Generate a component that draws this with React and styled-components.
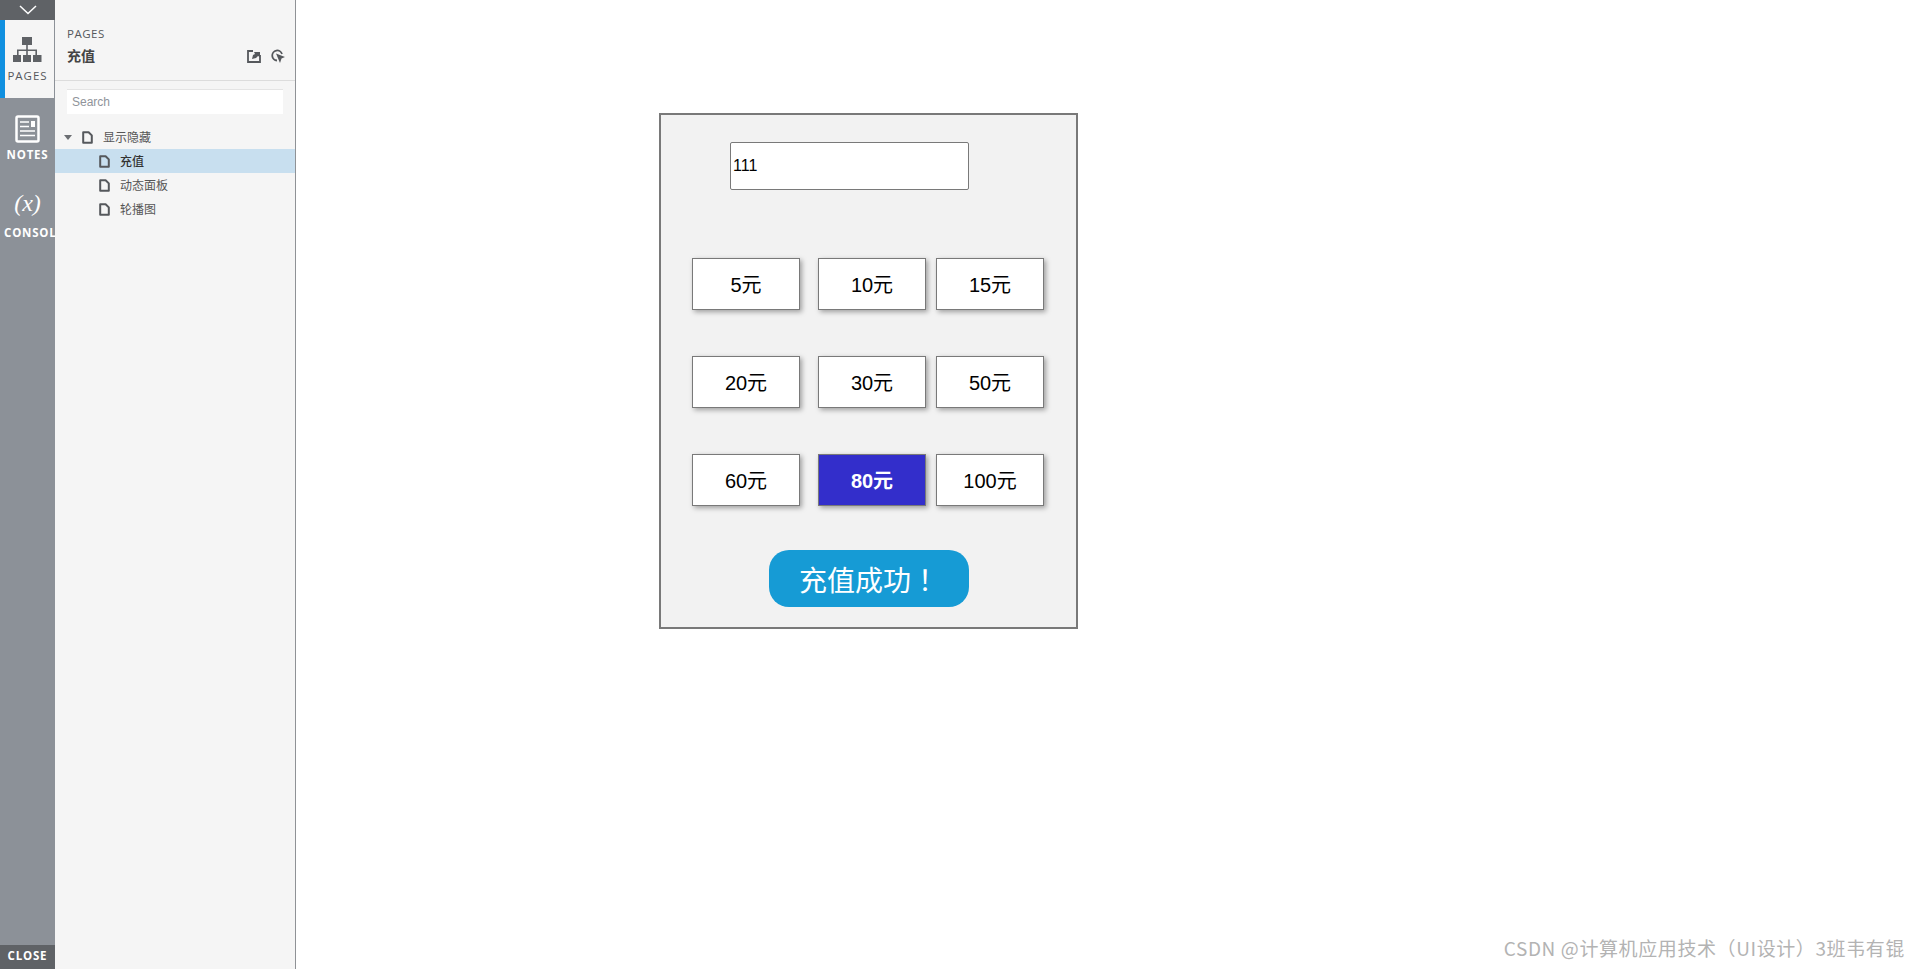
import React from "react"
import styled, { createGlobalStyle } from "styled-components"

const amounts = ["5元", "10元", "15元", "20元", "30元", "50元", "60元", "80元", "100元"]
const pages = ["充值", "动态面板", "轮播图"]

const DocIcon = () => (
  <svg width="11" height="13" viewBox="0 0 11 13" fill="none">
    <path d="M1.200 1.200h5.400l3.200 3.200v7.400H1.200z" stroke="#55585c" strokeWidth="2" strokeLinejoin="round" />
  </svg>
)

export default function App() {
  return (
    <>
      <GlobalStyle />
      <Page>
        <Rail>
          <Collapse>
            <svg width="18" height="10" viewBox="0 0 18 10" fill="none">
              <path d="M1 1l8 7.500L17 1" stroke="#fff" strokeWidth="1.500" />
            </svg>
          </Collapse>
          <RailTab $active>
            <svg width="29" height="26" viewBox="0 0 29 26" fill="#5f6266">
              <rect x="9" y="0" width="10" height="8" />
              <rect x="13.200" y="8" width="1.600" height="10" />
              <path d="M4 18v-5.500h20V18h-1.600v-3.900H5.600V18z" />
              <rect x="0" y="18" width="8" height="7" />
              <rect x="10" y="18" width="8" height="7" />
              <rect x="20" y="18" width="8.500" height="7" />
            </svg>
            <RailLabel $active>PAGES</RailLabel>
          </RailTab>
          <RailTab>
            <svg width="25" height="28" viewBox="0 0 25 28" fill="none">
              <rect x="1.500" y="1.500" width="22" height="25" rx="1.500" stroke="#fff" strokeWidth="2.500" />
              <path d="M5 7h9M5 11.500h9M5 16h15M5 20.500h15" stroke="#fff" strokeWidth="1.600" />
              <rect x="16" y="6" width="4" height="6" fill="#fff" />
            </svg>
            <RailLabel>NOTES</RailLabel>
          </RailTab>
          <RailTab>
            <Formula>(x)</Formula>
            <RailLabel $overflow>CONSOLE</RailLabel>
          </RailTab>
          <CloseBar>CLOSE</CloseBar>
        </Rail>

        <Sidebar>
          <SidebarHeader>
            <Overline>PAGES</Overline>
            <TitleRow>
              <PageTitle>充值</PageTitle>
              <HeaderIcons>
                <svg width="14" height="13" viewBox="0 0 14 13" fill="none">
                  <path d="M6 1H1v11h12V5" stroke="#55585c" strokeWidth="1.800" />
                  <path d="M5 9l1-4 2-1-1-2h6v5l-2-1-2 2z" fill="#55585c" />
                </svg>
                <svg width="14" height="14" viewBox="0 0 14 14" fill="none">
                  <path d="M6 11.500A5 5 0 1 1 11 5" stroke="#55585c" strokeWidth="1.800" />
                  <path d="M5 4.500l9 3.500-3.500 1.500L9 14z" fill="#55585c" />
                </svg>
              </HeaderIcons>
            </TitleRow>
          </SidebarHeader>
          <Search>Search</Search>
          <Tree>
            <TreeRow>
              <Caret />
              <DocIcon />
              <TreeText>显示隐藏</TreeText>
            </TreeRow>
            {pages.map((name, i) => (
              <TreeRow key={name} $child $selected={i === 0}>
                <DocIcon />
                <TreeText $selected={i === 0}>{name}</TreeText>
              </TreeRow>
            ))}
          </Tree>
        </Sidebar>

        <Canvas>
          <Card>
            <AmountInput>111</AmountInput>
            <AmountGrid>
              {amounts.map((amount) => (
                <AmountButton key={amount} $selected={amount === "80元"}>
                  {amount}
                </AmountButton>
              ))}
            </AmountGrid>
            <SuccessBadge>
              充值成功<Bang>！</Bang>
            </SuccessBadge>
          </Card>
        </Canvas>
        <Watermark>CSDN @计算机应用技术（UI设计）3班韦有锟</Watermark>
      </Page>
    </>
  )
}

const GlobalStyle = createGlobalStyle`
  html, body {
    margin: 0;
    padding: 0;
    background: #fff;
    font-family: "Liberation Sans", "Noto Sans CJK SC", sans-serif;
  }
`

const Page = styled.div`
  position: relative;
  display: flex;
  height: 969px;
  overflow: hidden;
`

const Rail = styled.nav`
  width: 55px;
  flex: none;
  display: flex;
  flex-direction: column;
  background: #8c9198;
`

const Collapse = styled.div`
  height: 20px;
  display: flex;
  align-items: center;
  justify-content: center;
  background: #5f6266;
`

const RailTab = styled.div`
  height: 78px;
  box-sizing: border-box;
  display: flex;
  flex-direction: column;
  align-items: center;
  padding: 17px ${(p) => (p.$active ? "4px" : "0")} 0 0;
  gap: ${(p) => (p.$active ? "6px" : "5px")};
  background: ${(p) => (p.$active ? "#f5f5f5" : "transparent")};
  border-left: ${(p) => (p.$active ? "5px solid #1090e0" : "0")};
  border-right: ${(p) => (p.$active ? "1px solid #8c9198" : "0")};
`

const RailLabel = styled.span`
  font-family: "Open Sans", "Liberation Sans", sans-serif;
  font-size: 11.500px;
  line-height: 14px;
  letter-spacing: ${(p) => (p.$active ? "1px" : "0.8px")};
  font-weight: ${(p) => (p.$active ? 400 : 700)};
  color: ${(p) => (p.$active ? "#55585c" : "#fff")};
  white-space: nowrap;
  ${(p) => p.$overflow && "align-self: flex-start; margin-left: 4px;"}
`

const Formula = styled.span`
  margin: -4px 0 4px;
  font-family: "Liberation Serif", serif;
  font-style: italic;
  font-size: 24px;
  line-height: 28px;
  color: #fff;
`

const CloseBar = styled.div`
  margin-top: auto;
  height: 24px;
  box-sizing: border-box;
  padding-bottom: 3px;
  display: flex;
  align-items: center;
  justify-content: center;
  background: #5f6266;
  color: #fff;
  font-family: "Open Sans", "Liberation Sans", sans-serif;
  font-size: 11.500px;
  font-weight: 700;
  letter-spacing: 0.8px;
`

const Sidebar = styled.aside`
  width: 241px;
  flex: none;
  box-sizing: border-box;
  background: #f5f5f5;
  border-right: 1px solid #8f9296;
`

const SidebarHeader = styled.header`
  height: 81px;
  box-sizing: border-box;
  padding: 26px 10px 0 12px;
  border-bottom: 1px solid #dcdcdc;
`

const Overline = styled.div`
  font-family: "Open Sans", "Liberation Sans", sans-serif;
  font-size: 11.500px;
  line-height: 15px;
  letter-spacing: 0.5px;
  color: #55585c;
`

const TitleRow = styled.div`
  display: flex;
  align-items: center;
  justify-content: space-between;
  margin-top: 5px;
`

const PageTitle = styled.span`
  font-size: 14px;
  line-height: 20px;
  font-weight: 700;
  color: #444;
`

const HeaderIcons = styled.div`
  display: flex;
  align-items: center;
  gap: 10px;
`

const Search = styled.div`
  margin: 8px 12px 0;
  height: 25px;
  box-sizing: border-box;
  padding-left: 5px;
  background: #fff;
  border-top: 1px solid #e4e4e4;
  font-size: 12px;
  line-height: 24px;
  color: #8f949a;
`

const Tree = styled.div`
  margin-top: 11px;
`

const TreeRow = styled.div`
  height: 24px;
  box-sizing: border-box;
  display: flex;
  align-items: center;
  gap: 10px;
  padding-left: ${(p) => (p.$child ? "44px" : "9px")};
  background: ${(p) => (p.$selected ? "#c8dfef" : "transparent")};
`

const Caret = styled.span`
  width: 0;
  height: 0;
  border-left: 4.500px solid transparent;
  border-right: 4.500px solid transparent;
  border-top: 5px solid #6b6e72;
`

const TreeText = styled.span`
  padding-top: 2px;
  font-size: 12px;
  line-height: 22px;
  color: ${(p) => (p.$selected ? "#333" : "#555")};
  font-weight: ${(p) => (p.$selected ? 500 : 400)};
`

const Canvas = styled.main`
  flex: 1;
  padding: 113px 0 0 363px;
`

const Card = styled.section`
  width: 419px;
  height: 516px;
  box-sizing: border-box;
  padding: 27px 0 0 31px;
  background: #f2f2f2;
  border: 2px solid #797979;
`

const AmountInput = styled.div`
  width: 239px;
  height: 48px;
  box-sizing: border-box;
  margin-left: 38px;
  padding-left: 2px;
  background: #fff;
  border: 1px solid #797979;
  border-radius: 2px;
  font-size: 16px;
  line-height: 46px;
  color: #000;
`

const AmountGrid = styled.div`
  display: grid;
  grid-template-columns: 126px 118px 108px;
  grid-auto-rows: 52px;
  row-gap: 46px;
  margin-top: 68px;
`

const AmountButton = styled.div`
  width: 108px;
  box-sizing: border-box;
  padding-bottom: 2px;
  display: flex;
  align-items: center;
  justify-content: center;
  background: ${(p) => (p.$selected ? "#332ecb" : "#fff")};
  border: 1px solid #797979;
  box-shadow: 2px 2px 5px rgba(0, 0, 0, 0.35);
  color: ${(p) => (p.$selected ? "#fff" : "#000")};
  font-size: 20px;
  font-weight: ${(p) => (p.$selected ? 700 : 400)};
`

const SuccessBadge = styled.div`
  width: 200px;
  height: 57px;
  margin: 44px 0 0 77px;
  display: flex;
  align-items: center;
  justify-content: center;
  background: #169bd5;
  border-radius: 20px;
  color: #fff;
  font-size: 28px;
`

// the TC face centres the full-width mark, as in the reference
const Bang = styled.span`
  font-family: "Noto Sans CJK TC", sans-serif;
`

const Watermark = styled.div`
  position: absolute;
  right: 15px;
  bottom: 9px;
  font-family: "Noto Sans CJK SC", sans-serif;
  font-size: 19px;
  line-height: 24px;
  letter-spacing: 0.6px;
  color: #b3b3b3;
  white-space: nowrap;
`
